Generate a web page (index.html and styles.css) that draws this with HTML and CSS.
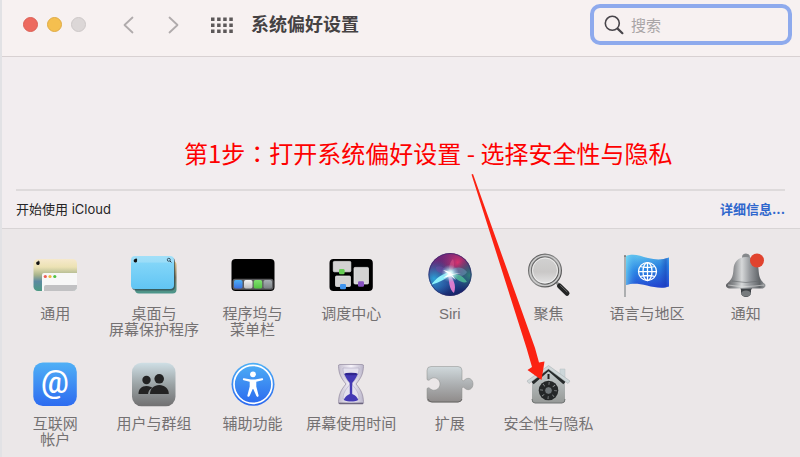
FILE: index.html
```html
<!DOCTYPE html>
<html lang="zh-CN">
<head>
<meta charset="utf-8">
<title>系统偏好设置</title>
<link rel="stylesheet" href="styles.css">
</head>
<body>
<div class="window">
  <header class="toolbar">
    <div class="lights">
      <button class="light light-close" aria-label="关闭"></button>
      <button class="light light-min" aria-label="最小化"></button>
      <button class="light light-off" aria-label="缩放" disabled></button>
    </div>
    <nav class="history">
      <button class="tool" aria-label="后退"><svg width="12" height="18" viewBox="0 0 12 18"><path d="M10.500 1.500 2.500 9l8 7.500" fill="none" stroke="#b0abac" stroke-width="1.800" stroke-linecap="round" stroke-linejoin="round"/></svg></button>
      <button class="tool" aria-label="前进"><svg width="12" height="18" viewBox="0 0 12 18"><path d="M2.500 1.500 10.500 9l-8 7.500" fill="none" stroke="#b0abac" stroke-width="1.800" stroke-linecap="round" stroke-linejoin="round"/></svg></button>
    </nav>
    <button class="tool" aria-label="显示全部"><svg width="22" height="16" viewBox="0 0 22 16"><path d="M0 2.200h22M0 8.200h22M0 14.200h22" fill="none" stroke="#5c5859" stroke-width="3.500" stroke-dasharray="3.500 2.600"/></svg></button>
    <h1 class="title">系统偏好设置</h1>
    <label class="search">
      <svg width="20" height="20" viewBox="0 0 20 20" fill="none" stroke="#48454a" stroke-linecap="round"><circle cx="8.300" cy="8.300" r="7" stroke-width="1.600"/><path d="m13.600 13.600 4.800 4.600" stroke-width="2.200"/></svg>
      <input type="search" placeholder="搜索" aria-label="搜索">
    </label>
  </header>

  <section class="account">
    <p class="note">第1步<span class="colon" lang="zh-TW">：</span>打开系统偏好设置 - 选择安全性与隐私</p>
    <div class="icloud">
      <span>开始使用 iCloud</span>
      <a href="#">详细信息...</a>
    </div>
  </section>

  <main class="panes">
    <a class="pane" href="#">
      <svg viewBox="0 0 48 48">
        <defs>
          <linearGradient id="gen" x2="0" y2="1"><stop stop-color="#f6e9cd"/><stop offset=".25" stop-color="#ece2b4"/><stop offset=".5" stop-color="#a8b48c"/><stop offset=".7" stop-color="#5b89a0"/><stop offset="1" stop-color="#4c9a83"/></linearGradient>
          <clipPath id="genClip"><rect x="2.500" y="9" width="43.500" height="32" rx="4.500"/></clipPath>
        </defs>
        <g clip-path="url(#genClip)"><path fill="url(#gen)" d="M2 9h44v32H2z"/><path fill="#f7f7f7" d="M11 25q0-2 2-2h34v18H11z"/><path fill="#c1c1c3" d="M13 37q0-2 2-2h32v6H13z"/></g>
        <circle cx="14.300" cy="26.500" r="1.600" fill="#ec5f55"/><circle cx="19" cy="26.500" r="1.600" fill="#f0b53c"/><circle cx="23.800" cy="26.500" r="1.600" fill="#52c243"/>
        <path d="M6.600 11.500c1.600-.7 2.500.1 1.900 1.200.6 1-.5 2.400-1.300 2.200-1.100.2-2-.5-2-1.700 0-.9.600-1.600 1.400-1.700zM7 11.200l.9-1-.1.900z" fill="#111"/>
      </svg>
      <span>通用</span>
    </a>
    <a class="pane" href="#">
      <svg viewBox="0 0 48 48">
        <defs>
          <linearGradient id="desk" x2="0" y2="1"><stop stop-color="#a2e0f8"/><stop offset=".18" stop-color="#9bddf8"/><stop offset=".22" stop-color="#82d5f8"/><stop offset="1" stop-color="#61c5f4"/></linearGradient>
          <linearGradient id="deskBack" x2="0" y2="1"><stop stop-color="#e2c48a"/><stop offset=".5" stop-color="#77715c"/><stop offset="1" stop-color="#4b988d"/></linearGradient>
        </defs>
        <rect x="5" y="11" width="41.500" height="32.500" rx="4" fill="url(#deskBack)"/>
        <rect x="2" y="7.500" width="43" height="33" rx="4" fill="#28434d" opacity=".65"/>
        <rect x="1" y="6" width="43" height="33" rx="4" fill="url(#desk)"/>
        <path d="M5.100 9c1.600-.7 2.500.1 1.900 1.200.6 1-.5 2.400-1.300 2.200-1.100.2-2-.5-2-1.700 0-.9.600-1.600 1.400-1.700zM5.500 8.700l.9-1-.1.900z" fill="#111"/>
        <circle cx="38.800" cy="9.800" r="1.500" fill="none" stroke="#234" stroke-width=".8"/><path d="m40 11 1.400 1.400" stroke="#234" stroke-width="1"/>
      </svg>
      <span>桌面与<br>屏幕保护程序</span>
    </a>
    <a class="pane" href="#">
      <svg viewBox="0 0 48 48">
        <defs>
          <linearGradient id="t1" x2="0" y2="1"><stop stop-color="#4db0f4"/><stop offset="1" stop-color="#3a6fe0"/></linearGradient>
          <linearGradient id="t2" x2="0" y2="1"><stop stop-color="#f4f4f4"/><stop offset="1" stop-color="#bdbdbd"/></linearGradient>
          <linearGradient id="t3" x2="0" y2="1"><stop stop-color="#80e070"/><stop offset="1" stop-color="#54c442"/></linearGradient>
          <linearGradient id="t4" x2="0" y2="1"><stop stop-color="#a8b0b4"/><stop offset="1" stop-color="#7c8286"/></linearGradient>
        </defs>
        <rect x="2.500" y="9" width="43" height="32" rx="4" fill="#000"/>
        <rect x="3.500" y="28.800" width="41" height="11" rx="2.500" fill="#5b5b5e"/>
        <rect x="5" y="30" width="8.500" height="8.500" rx="1.800" fill="url(#t1)"/><rect x="15" y="30" width="8.500" height="8.500" rx="1.800" fill="url(#t2)"/><rect x="24.700" y="30" width="8.500" height="8.500" rx="1.800" fill="url(#t3)"/><rect x="34.500" y="30" width="8.500" height="8.500" rx="1.800" fill="url(#t4)"/>
      </svg>
      <span>程序坞与<br>菜单栏</span>
    </a>
    <a class="pane" href="#">
      <svg viewBox="0 0 48 48">
        <rect x="2.500" y="9" width="43.300" height="32" rx="4" fill="#000"/>
        <g fill="#d3d2d2" stroke="#ededed" stroke-width=".7"><rect x="6.300" y="11.400" width="17.500" height="10.400" rx="1"/><rect x="8.500" y="26" width="15" height="10.500" rx="1"/><rect x="27" y="17.400" width="14.500" height="16.600" rx="1"/></g>
        <rect x="12" y="19" width="5.600" height="5.300" rx="1.300" fill="#66ce54"/><rect x="13" y="34" width="6" height="5.300" rx="1.300" fill="#3f94ee"/><rect x="31" y="31.200" width="6" height="5.600" rx="1.300" fill="#8650c0"/>
      </svg>
      <span>调度中心</span>
    </a>
    <a class="pane" href="#">
      <svg viewBox="0 0 48 48">
        <defs>
          <linearGradient id="siri" x1=".25" x2=".6" y2="1"><stop stop-color="#7b237b"/><stop offset=".4" stop-color="#503372"/><stop offset=".7" stop-color="#234a94"/><stop offset="1" stop-color="#141f63"/></linearGradient>
          <radialGradient id="siriRed" cx=".68" cy=".22" r=".4"><stop stop-color="#d9316d"/><stop offset="1" stop-color="#a32d76" stop-opacity="0"/></radialGradient>
          <radialGradient id="siriBlue" cx=".13" cy=".6" r=".45"><stop stop-color="#2aa3d8"/><stop offset="1" stop-color="#3066b5" stop-opacity="0"/></radialGradient>
          <radialGradient id="siriTeal" cx=".96" cy=".52" r=".4"><stop stop-color="#317f7a"/><stop offset="1" stop-color="#244b66" stop-opacity="0"/></radialGradient>
          <radialGradient id="siriGlow"><stop stop-color="#fff"/><stop offset=".3" stop-color="#d6fbfb" stop-opacity=".9"/><stop offset="1" stop-color="#74bce2" stop-opacity="0"/></radialGradient>
        </defs>
        <circle cx="24" cy="24.500" r="21.500" fill="url(#siri)"/><circle cx="24" cy="24.500" r="21.500" fill="url(#siriRed)"/><circle cx="24" cy="24.500" r="21.500" fill="url(#siriBlue)"/><circle cx="24" cy="24.500" r="21.500" fill="url(#siriTeal)"/>
        <path d="M23 23C13 25 9 20 10 17c4-2 9 0 13 6z" fill="#714aa4" opacity=".5"/>
        <path d="M24 23c-2-6 0-11 3-14 2 5 1 11-3 14z" fill="#ff6998" opacity=".35"/>
        <path d="M23 23c5-7 13-7 18-1-2 4-7 6-18 1z" fill="#6691b2" opacity=".6"/>
        <path d="M23 24c6-1 13 0 18 8-6 2-11-4-18-8z" fill="#56c89c" opacity=".75"/>
        <path d="M22 23c5 5 9 12 6 20-5-3-5-13-6-20z" fill="#ee82d4" opacity=".9"/>
        <path d="M25 22c-8 1-15 6-20 13 9-3 15-6 20-11z" fill="#8cf1fb"/>
        <circle cx="24" cy="23.500" r="9" fill="url(#siriGlow)"/>
        <path d="M17 20c5 1 7 2 9 4l9-1-9 2 4 5-5-4-8 2 6-4z" fill="#fff"/>
        <circle cx="24" cy="24.500" r="21" fill="none" stroke="#302b6a" stroke-opacity=".65"/>
      </svg>
      <span>Siri</span>
    </a>
    <a class="pane" href="#">
      <svg viewBox="0 0 48 48">
        <defs><linearGradient id="lens" x2="0" y2="1"><stop stop-color="#d2d2d2"/><stop offset=".55" stop-color="#cac8c7"/><stop offset="1" stop-color="#e7e7e8"/></linearGradient>
        <linearGradient id="rim" x2="1" y2="1"><stop stop-color="#555"/><stop offset=".5" stop-color="#8d8d8d"/><stop offset="1" stop-color="#393939"/></linearGradient></defs>
        <path d="m32.500 32.500 4 4" stroke="#999" stroke-width="3"/>
        <path d="m35.500 36 7.500 7.300" stroke="#242525" stroke-width="5" stroke-linecap="round"/><path d="m36.500 35.500 6.500 6.300" stroke="#686868" stroke-width="1" stroke-linecap="round"/>
        <circle cx="21" cy="20.500" r="15" fill="url(#lens)" stroke="url(#rim)" stroke-width="4"/>
        <circle cx="21" cy="20.500" r="15" fill="none" stroke="#c9c9c9" stroke-width="1.700"/><circle cx="21" cy="20.500" r="12.500" fill="none" stroke="#f4f4f4" stroke-width=".8"/>
      </svg>
      <span>聚焦</span>
    </a>
    <a class="pane" href="#">
      <svg viewBox="0 0 48 48">
        <defs><linearGradient id="flag" x1=".3" x2=".5" y2="1"><stop stop-color="#61c3ee"/><stop offset=".45" stop-color="#2a86e4"/><stop offset="1" stop-color="#2446d2"/></linearGradient>
        <linearGradient id="fold"><stop stop-color="#80e6f2" stop-opacity=".6"/><stop offset=".25" stop-color="#318cf0" stop-opacity="0"/><stop offset=".8" stop-color="#163ea8" stop-opacity=".1"/><stop offset=".93" stop-color="#163cae" stop-opacity=".5"/><stop offset="1" stop-color="#2b75ef" stop-opacity=".2"/></linearGradient></defs>
        <path d="M3 6c8-3 14 0 22 2s14 2 21-.5v29c-7 2.500-14 1-22-1S9 33 3 35z" fill="url(#flag)"/><path d="M3 6c8-3 14 0 22 2s14 2 21-.5v29c-7 2.500-14 1-22-1S9 33 3 35z" fill="url(#fold)"/>
        <path d="M2 6v41" stroke="#9da0a1" stroke-width="1.600"/><circle cx="2" cy="6" r="1" fill="#777"/>
        <g fill="none" stroke="#fff" stroke-width="1.250"><circle cx="24.500" cy="21.500" r="9"/><ellipse cx="24.500" cy="21.500" rx="4.500" ry="9"/><path d="M24.500 12.500v18M15.500 21.500h18M17 16.500q7.500 2 15 0M17 26.500q7.500-2 15 0"/></g>
      </svg>
      <span>语言与地区</span>
    </a>
    <a class="pane" href="#">
      <svg viewBox="0 0 48 48">
        <defs><linearGradient id="bell"><stop stop-color="#5b5c5f"/><stop offset=".22" stop-color="#929497"/><stop offset=".4" stop-color="#d6d8d9"/><stop offset=".6" stop-color="#999ca0"/><stop offset=".85" stop-color="#606468"/><stop offset="1" stop-color="#9a9da0"/></linearGradient></defs>
        <path d="M18 37h13l-2 3v3q-1 4-5 4t-5-4v-3z" fill="#3e4246"/><ellipse cx="24" cy="43.500" rx="5" ry="3" fill="#777b7e"/>
        <circle cx="24" cy="7.500" r="4" fill="#85888b"/>
        <path d="M24 7c8 0 12 5 12.500 12 .5 8 1.500 11 6.500 15 1.500 2-.5 4.500-3 4.500H7.500c-2.500 0-4.500-2.500-3-4.500 5-4 6.500-7 7-15C12 12 16 7 24 7z" fill="url(#bell)"/>
        <path d="M10 31q14 3 28 0" fill="none" stroke="#65686b" stroke-width=".6"/><path d="M6 35q18 3 36 0" fill="none" stroke="#dedede" stroke-width="1.200" opacity=".6"/>
        <circle cx="35" cy="10.500" r="7" fill="#e1432e"/>
      </svg>
      <span>通知</span>
    </a>

    <a class="pane" href="#">
      <svg viewBox="0 0 48 48">
        <defs><linearGradient id="at" x2="0" y2="1"><stop stop-color="#4fb0f6"/><stop offset="1" stop-color="#2d6bf0"/></linearGradient></defs>
        <rect x="2.300" y="2.500" width="43.500" height="43.500" rx="9.500" fill="url(#at)"/>
        <text class="at" x="24" y="33" text-anchor="middle">@</text>
      </svg>
      <span>互联网<br>帐户</span>
    </a>
    <a class="pane" href="#">
      <svg viewBox="0 0 48 48">
        <defs><linearGradient id="users" x2="0" y2="1"><stop stop-color="#cfdfe5"/><stop offset=".5" stop-color="#9ba3a5"/><stop offset="1" stop-color="#717071"/></linearGradient></defs>
        <rect x="2" y="2.700" width="43.500" height="43.500" rx="9.500" fill="url(#users)"/>
        <g fill="#232323"><circle cx="16.500" cy="20" r="4.200"/><path d="M8.500 34c0-5 3-8 8-8 3 0 5 1 6 2-3 1-4 3-4.500 6z"/><circle cx="29.200" cy="18.800" r="4.800"/><path d="M20 34c0-5.500 4-9 9.300-9s9.500 3.500 9.500 9z"/></g>
      </svg>
      <span>用户与群组</span>
    </a>
    <a class="pane" href="#">
      <svg viewBox="0 0 48 48">
        <defs><linearGradient id="acc" x2="0" y2="1"><stop stop-color="#4fb0f5"/><stop offset="1" stop-color="#2967ef"/></linearGradient></defs>
        <circle cx="24" cy="24.300" r="21.500" fill="url(#acc)"/><circle cx="24" cy="24.300" r="19" fill="none" stroke="#fff" stroke-width="1.700"/>
        <circle cx="24" cy="14.300" r="2.900" fill="#fff"/><path d="M15 18.200 22 19.500h4l7-1.300c1.500 0 1.500 1.800.3 2.100l-6 1.500v4.700l2.300 9c.2 1.500-1.700 1.900-2.200.6L24.300 29h-.6l-3.100 7.100c-.6 1.300-2.500.8-2.200-.6l2.300-9v-4.700l-6-1.500c-1.200-.4-1.100-2.200.3-2.100z" fill="#fff"/>
      </svg>
      <span>辅助功能</span>
    </a>
    <a class="pane" href="#">
      <svg viewBox="0 0 48 48">
        <defs><linearGradient id="glass"><stop stop-color="#c3bdce"/><stop offset=".5" stop-color="#f7f4fb"/><stop offset="1" stop-color="#b9b4c9"/></linearGradient></defs>
        <path d="M13 4.500h22q2 0 1.500 2C36 13 35 17 29 24c6 7 7 11 7.500 17.500.5 2-.5 2.500-1.500 2.500H13q-2 0-1.500-2.500C12 35 13 31 19 24c-6-7-7-11-7.500-17.500q-.5-2 1.500-2z" fill="url(#glass)" stroke="#92899f" stroke-width=".7"/>
        <path d="M16 8h16c0 6-2 10-6.500 15v2c4.500 5 6.500 9 6.500 14H16c0-5 2-9 6.500-14v-2C18 18 16 14 16 8z" fill="#e4e1ed" stroke="#a49eb8" stroke-width=".5"/>
        <path d="M17.300 14h13.400c-1 3-3 6-5.500 9v11c3 1 5 3 6 6-4 2-10 2-14.400 0 1-3 3.300-5 6-6V23c-2.500-3-4.500-6-5.500-9z" fill="#4439b4"/><ellipse cx="24" cy="14" rx="6.700" ry="1.300" fill="#2f258e"/>
        <path d="M12 43.300h24" stroke="#6a627b" stroke-width="1.300"/>
      </svg>
      <span>屏幕使用时间</span>
    </a>
    <a class="pane" href="#">
      <svg viewBox="0 0 48 48">
        <defs><linearGradient id="puz" x2="0" y2="1"><stop stop-color="#d0d9dc"/><stop offset=".5" stop-color="#adb0b2"/><stop offset="1" stop-color="#8f8b8a"/></linearGradient></defs>
        <path d="M5 6.500h27q4 0 4 4V20c1 1.500 2 .5 3-.5 4-3 8 0 8 4.500s-4 7.500-8 4.500c-1-1-2-2-3-.5v10q0 4-4 4H5q-4 0-4-4V28.500c1.500-1.500 2.500-.5 3.500.5 4 3 9.500 0 9.500-5s-5.500-8-9.500-5c-1 1-2 2-3.500.5v-9q0-4 4-4z" fill="url(#puz)" stroke="#8a8c8b" stroke-width=".5"/><path d="M2 39q1 3 4 3h26q3 0 4-3" fill="none" stroke="#686665" stroke-width="1"/>
      </svg>
      <span>扩展</span>
    </a>
    <a class="pane" href="#">
      <svg viewBox="0 0 48 48">
        <defs><linearGradient id="house" x2="0" y2="1"><stop stop-color="#c8d0d2"/><stop offset="1" stop-color="#969997"/></linearGradient></defs>
        <path d="M36 9h5v13h-5z" fill="#cdd7da" stroke="#b7bfc1" stroke-width=".5"/>
        <path d="M8 20 24.500 8 41 20v20q0 3-3 3H11q-3 0-3-3z" fill="url(#house)"/>
        <path d="m8.500 23 16-14 16 14" fill="none" stroke="#262a2b" stroke-width="3.500"/>
        <path d="M3 21 24.500 5.500 46 21l-2 2.500L24.500 9 5 23.500z" fill="#d0d8da" stroke="#a3aaac" stroke-width=".5"/>
        <path d="M8 39q0 4 3 4h27q3 0 3-4" fill="none" stroke="#717574" stroke-width="1"/>
        <path d="M24.500 14v5" stroke="#222" stroke-width="2"/>
        <circle cx="24.500" cy="30.500" r="9.800" fill="#242728"/><circle cx="24.500" cy="30.500" r="7" fill="none" stroke="#979b9d" stroke-width="3" stroke-dasharray=".7 4.798"/><circle cx="24.500" cy="30.500" r="3.800" fill="#70777a" stroke="#111" stroke-width=".6"/>
      </svg>
      <span>安全性与隐私</span>
    </a>
  </main>

  <svg class="arrow" width="76" height="208" viewBox="0 0 76 208" aria-hidden="true"><path d="M.5.500 2 0 64 174 68 188.500 73.500 187.500 70.500 206 56.500 196 61 193 55.500 174Z" fill="#fb2212"/></svg>
</div>
</body>
</html>
```
FILE: styles.css
```css
* {
  box-sizing: border-box;
}

body {
  margin: 0;
  background: #ebe7e8;
  font-family: "Liberation Sans", "Noto Sans CJK SC", sans-serif;
}

.window {
  position: relative;
  min-height: 100vh;
  border-left: 2px solid #e2e2e5;
  background: #ebe7e8;
}

.toolbar {
  display: flex;
  align-items: center;
  height: 57px;
  padding: 0 8px 7px 21px;
  border-bottom: 1px solid #d8d1d2;
  background: #f7f1f1;
}

button {
  display: block;
  padding: 0;
  border: 0;
  background: none;
}

.tool svg {
  display: block;
}

.lights {
  display: flex;
  gap: 9px;
}

.light {
  width: 15px;
  height: 15px;
  border: 1px solid #dc6056;
  border-radius: 50%;
  background: #ed6a5f;
}

.light-min {
  border-color: #dfab45;
  background: #f5bf4f;
}

.light-off {
  border-color: #cdc8c8;
  background: #dcd7d7;
}

.history {
  display: flex;
  gap: 33px;
  margin: 0 32px 0 36px;
}

.title {
  flex: 1;
  margin: 0 0 0 18px;
  padding-bottom: 3px;
  color: #454243;
  font: 700 18px/24px "Noto Sans CJK SC", sans-serif;
}

.search {
  display: flex;
  align-items: center;
  gap: 7px;
  width: 202px;
  height: 41px;
  padding: 0 10px;
  border: 4px solid #8eaaed;
  border-radius: 10px;
}

.search svg {
  flex: none;
}

.search input {
  flex: 1;
  min-width: 0;
  padding: 0;
  border: 0;
  outline: 0;
  background: none;
  font: 15px/20px "Noto Sans CJK SC", sans-serif;
}

.search input::placeholder {
  color: #a9a5a6;
}

.account {
  padding: 80px 15px 0 14px;
  border-bottom: 1px solid #d8d4d5;
  background: #f2edef;
}

.note {
  margin: 0 0 0 168px;
  padding-bottom: 20px;
  color: #fe0000;
  font: 24px/32px "Noto Sans CJK SC", sans-serif;
}

.colon {
  font-family: "Noto Sans CJK TC", sans-serif;
}

.icloud {
  display: flex;
  justify-content: space-between;
  align-items: center;
  height: 39px;
  padding-bottom: 2px;
  border-top: 2px solid #dedadb;
  color: #252425;
  font: 13px/20px Inter, "Noto Sans CJK SC", sans-serif;
}

.icloud a {
  color: #2f67cd;
  font-weight: 700;
  text-decoration: none;
}

.panes {
  display: grid;
  grid-template-columns: repeat(8, 1fr);
  row-gap: 22px;
  padding: 21px 5px 8px 4px;
}

.pane {
  display: flex;
  flex-direction: column;
  align-items: center;
  gap: 8px;
  min-height: 88px;
  color: #747172;
  font: 15px/16px "Liberation Sans", "Noto Sans CJK SC", sans-serif;
  text-align: center;
  text-decoration: none;
  white-space: nowrap;
}

.pane svg {
  width: 48px;
  height: 48px;
}

.at {
  fill: #fff;
  font: 500 31px Roboto, sans-serif;
}

.arrow {
  position: absolute;
  top: 174px;
  left: 469px;
}
```
